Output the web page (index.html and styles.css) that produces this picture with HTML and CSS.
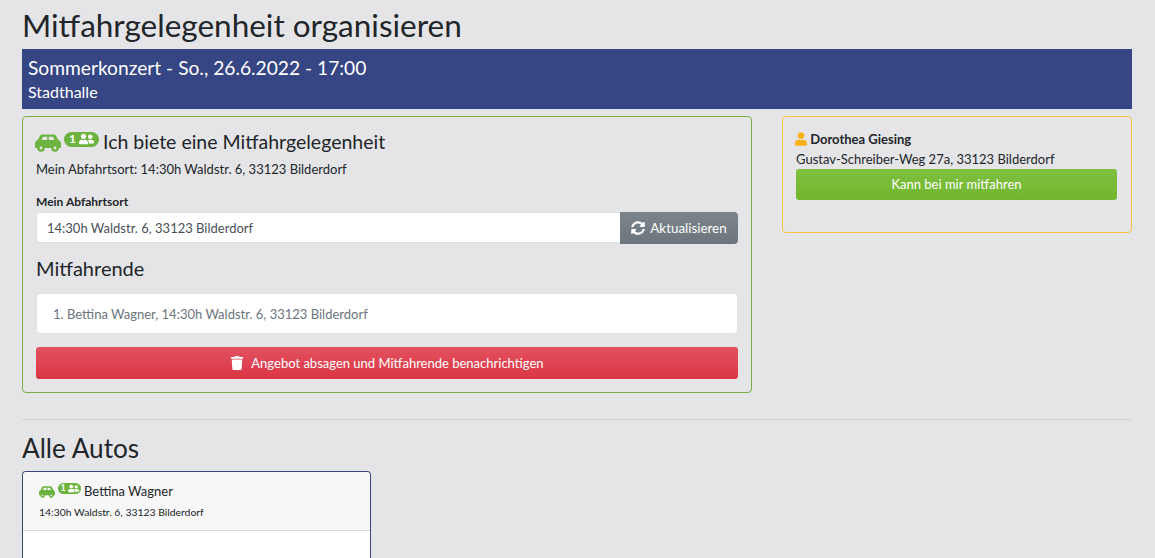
FILE: index.html
```html
<!DOCTYPE html>
<html lang="de">
<head>
  <meta charset="UTF-8" />
  <title>Mitfahrgelegenheit organisieren</title>
  <link rel="stylesheet" href="styles.css">
</head>
<body>
  <svg class="icon-defs" width="0" height="0">
    <symbol id="i-car" viewBox="0 0 26 18" preserveAspectRatio="none">
      <path fill-rule="evenodd" d="M7.500 .5h11c1.100 0 2 .5 2.600 1.400L23.300 6c1.600.6 2.700 2 2.700 3.800V13c0 .6-.4 1-1 1H1c-.6 0-1-.4-1-1V9.800C0 8 1.100 6.600 2.700 6L5 1.900C5.500 1 6.400 .5 7.500 .5zM8.200 2.800 6.500 6h5.700V2.800zm5.600 0V6h5.700l-1.700-3.200z"/>
      <circle cx="6" cy="14" r="3.800"/>
      <circle cx="20" cy="14" r="3.800"/>
      <circle class="car-hub" cx="6" cy="14" r="1.400"/>
      <circle class="car-hub" cx="20" cy="14" r="1.400"/>
    </symbol>
    <symbol id="i-users" viewBox="0 0 640 512"><path d="M192 256c61.900 0 112-50.100 112-112S253.900 32 192 32 80 82.100 80 144s50.100 112 112 112zm76.800 32h-8.300c-20.800 10-43.900 16-68.500 16s-47.600-6-68.500-16h-8.300C51.600 288 0 339.600 0 403.200V432c0 26.500 21.500 48 48 48h288c26.500 0 48-21.500 48-48v-28.800c0-63.600-51.600-115.200-115.200-115.200zM480 256c53 0 96-43 96-96s-43-96-96-96-96 43-96 96 43 96 96 96zm48 32h-3.800c-13.900 4.800-28.600 8-44.200 8s-30.300-3.200-44.200-8H432c-20.400 0-39.200 5.900-55.700 15.400 24.400 26.300 39.700 61.200 39.700 99.800v38.400c0 2.200-.5 4.300-.6 6.400H592c26.500 0 48-21.500 48-48 0-61.900-50.100-112-112-112z"/></symbol>
  </svg>

  <main class="container">
    <h1 class="page-title">Mitfahrgelegenheit organisieren</h1>

    <div class="event-banner">
      <div class="event-name">Sommerkonzert - So., 26.6.2022 - 17:00</div>
      <div class="event-place">Stadthalle</div>
    </div>

    <div class="offer-row">
      <section class="offer-card">
        <h2 class="offer-title">
          <svg class="car-icon"><use href="#i-car"/></svg>
          <span class="seat-badge">1<svg class="users-icon"><use href="#i-users"/></svg></span>
          <span>Ich biete eine Mitfahrgelegenheit</span>
        </h2>
        <p class="offer-meta">Mein Abfahrtsort: 14:30h Waldstr. 6, 33123 Bilderdorf</p>

        <label class="field-label" for="abfahrtsort">Mein Abfahrtsort</label>
        <div class="input-group">
          <input id="abfahrtsort" class="text-input" type="text" value="14:30h Waldstr. 6, 33123 Bilderdorf">
          <button class="btn btn-grey">
            <svg class="btn-icon" viewBox="0 0 512 512"><path d="M370.720 133.280C339.458 104.008 298.888 87.962 255.848 88c-77.458.068-144.328 53.178-162.791 126.850-1.344 5.363-6.122 9.150-11.651 9.150H24.103c-7.498 0-13.194-6.807-11.807-14.176C33.933 94.924 134.813 8 256 8c66.448 0 126.791 26.136 171.315 68.685L463.030 40.970C478.149 25.851 504 36.559 504 57.941V192c0 13.255-10.745 24-24 24H345.941c-21.382 0-32.090-25.851-16.971-40.971l41.750-41.749zM32 296h134.059c21.382 0 32.090 25.851 16.971 40.971l-41.750 41.750c31.262 29.273 71.835 45.319 114.876 45.280 77.418-.070 144.315-53.144 162.787-126.849 1.344-5.363 6.122-9.150 11.651-9.150h57.304c7.498 0 13.194 6.807 11.807 14.176C478.067 417.076 377.187 504 256 504c-66.448 0-126.791-26.136-171.315-68.685L48.970 471.030C33.851 486.149 8 475.441 8 454.059V320c0-13.255 10.745-24 24-24z"/></svg>
            Aktualisieren
          </button>
        </div>

        <h3 class="riders-title">Mitfahrende</h3>
        <ol class="riders-list">
          <li>Bettina Wagner, 14:30h Waldstr. 6, 33123 Bilderdorf</li>
        </ol>

        <button class="btn btn-red btn-block">
          <svg class="btn-icon trash" viewBox="0 0 448 512"><path d="M432 32H312l-9.400-18.700A24 24 0 0 0 281.100 0H166.800a23.720 23.720 0 0 0-21.400 13.300L136 32H16A16 16 0 0 0 0 48v32a16 16 0 0 0 16 16h416a16 16 0 0 0 16-16V48a16 16 0 0 0-16-16zM53.200 467a48 48 0 0 0 47.900 45h245.800a48 48 0 0 0 47.900-45L416 128H32z"/></svg>
          Angebot absagen und Mitfahrende benachrichtigen
        </button>
      </section>

      <aside class="request-card">
        <div class="request-name">
          <svg class="user-icon" viewBox="0 0 448 512"><path d="M224 256c70.700 0 128-57.300 128-128S294.700 0 224 0 96 57.300 96 128s57.300 128 128 128zm89.600 32h-16.700c-22.200 10.200-46.900 16-72.900 16s-50.600-5.800-72.900-16h-16.700C60.200 288 0 348.200 0 422.400V464c0 26.500 21.500 48 48 48h352c26.500 0 48-21.500 48-48v-41.600c0-74.200-60.200-134.400-134.400-134.400z"/></svg>
          Dorothea Giesing
        </div>
        <div class="request-address">Gustav-Schreiber-Weg 27a, 33123 Bilderdorf</div>
        <button class="btn btn-green btn-block">Kann bei mir mitfahren</button>
      </aside>
    </div>

    <hr class="divider">

    <h2 class="cars-title">Alle Autos</h2>
    <div class="car-card">
      <div class="car-card-head">
        <div class="car-driver">
          <svg class="car-icon small"><use href="#i-car"/></svg>
          <span class="seat-badge small">1<svg class="users-icon"><use href="#i-users"/></svg></span>
          <span>Bettina Wagner</span>
        </div>
        <div class="car-address">14:30h Waldstr. 6, 33123 Bilderdorf</div>
      </div>
    </div>
  </main>
</body>
</html>
```

FILE: styles.css
```css
html, body {
  height: 100%;
  overflow: hidden;
}

body {
  margin: 0;
  background: #e5e5e8;
  color: #212529;
  font-family: 'Lato', sans-serif;
  font-size: 13px;
  line-height: 1.5;
}

.icon-defs {
  position: absolute;
}

.container {
  padding: 0 23px 0 22px;
}

.page-title {
  margin: 0;
  padding-top: 5px;
  height: 49px;
  box-sizing: border-box;
  font-size: 31.5px;
  font-weight: 400;
  line-height: 40px;
}

.event-banner {
  height: 60px;
  box-sizing: border-box;
  padding: 6px 6px;
  background: #364583;
  color: #fff;
}

.event-name {
  font-size: 19.2px;
  line-height: 26px;
}

.event-place {
  font-size: 16px;
  line-height: 22px;
}

.offer-row {
  display: flex;
  justify-content: space-between;
  align-items: flex-start;
  margin-top: 7px;
}

.offer-card {
  width: 730px;
  height: 277px;
  box-sizing: border-box;
  padding: 12px 13px;
  border: 1px solid #76b043;
  border-radius: 4px;
}

.offer-title {
  display: flex;
  align-items: center;
  margin: 0;
  font-size: 19.5px;
  font-weight: 400;
  line-height: 26px;
}

.car-icon {
  flex: none;
  width: 26px;
  height: 18px;
  margin: 2px 3px 0 -1px;
  fill: #6db33f;
}

.car-hub {
  fill: #e5e5e8;
}

.seat-badge {
  display: inline-flex;
  align-items: center;
  justify-content: center;
  gap: 3px;
  width: 35px;
  height: 15px;
  margin: -6px 4px 0 0;
  border-radius: 8px;
  background: #6db33f;
  color: #fff;
  font-size: 12px;
  font-weight: 700;
}

.users-icon {
  width: 15px;
  height: 12px;
  fill: #fff;
}

.car-driver {
  display: flex;
  align-items: center;
  line-height: 20px;
}

.car-icon.small {
  width: 16px;
  height: 12px;
  margin: 2px 3px 0 0;
}

.seat-badge.small {
  gap: 2px;
  width: 23px;
  height: 11px;
  margin: -6px 3px 0 0;
  font-size: 9px;
}

.seat-badge.small .users-icon {
  width: 11px;
  height: 9px;
}

.offer-meta {
  margin: 4px 0 0;
  line-height: 20px;
}

.field-label {
  display: block;
  margin-top: 15px;
  font-size: 12px;
  font-weight: 700;
  line-height: 16px;
}

.input-group {
  display: flex;
  margin-top: 2px;
}

.text-input {
  flex: 1;
  height: 31px;
  box-sizing: border-box;
  padding: 0 10px;
  border: 1px solid #dcdfe3;
  border-right: 0;
  border-radius: 4px 0 0 4px;
  background: #fff;
  color: #495057;
  font: 13px 'Lato', sans-serif;
}

.btn {
  border: 0;
  color: #fff;
  font: 13px 'Lato', sans-serif;
  line-height: 21px;
}

.btn-block {
  display: block;
  width: 100%;
}

.btn-icon {
  width: 14px;
  height: 14px;
  fill: #fff;
  vertical-align: -2px;
  margin-right: 2px;
}

.btn-grey {
  width: 118px;
  height: 32px;
  padding: 0;
  border-radius: 0 4px 4px 0;
  background: linear-gradient(#7d858c, #6c757d);
  font-size: 13.4px;
}

.riders-title {
  margin: 12px 0 0;
  font-size: 20px;
  font-weight: 400;
  line-height: 24px;
}

.riders-list {
  margin: 13px 0 0;
  padding: 11px 16px 9px;
  border: 1px solid #dfe1e5;
  border-radius: 4px;
  background: #fff;
  color: #6c757d;
  list-style-position: inside;
  line-height: 19px;
}

.btn-red {
  height: 32px;
  margin-top: 13px;
  border-radius: 3px;
  background: linear-gradient(#e2525f, #dc3545);
}

.btn-icon.trash {
  margin-right: 4px;
}

.request-card {
  width: 350px;
  height: 117px;
  box-sizing: border-box;
  padding: 12px 14px 12px 13px;
  border: 1px solid #f6c343;
  border-radius: 4px;
}

.request-name {
  font-weight: 700;
  line-height: 20px;
}

.user-icon {
  width: 12px;
  height: 14px;
  margin-left: -1px;
  fill: #f9b116;
  vertical-align: -2px;
}

.request-address {
  line-height: 20px;
}

.btn-green {
  height: 31px;
  border-radius: 3px;
  background: linear-gradient(#7fc03f, #71b62f);
}

.divider {
  margin: 26px 0 0;
  border: 0;
  border-top: 1px solid #d3d3d6;
}

.cars-title {
  margin: 10px 0 0;
  font-size: 26.2px;
  font-weight: 400;
  line-height: 36px;
}

.car-card {
  width: 349px;
  height: 87px;
  box-sizing: border-box;
  margin-top: 5px;
  border: 1px solid #3a4570;
  border-bottom: 0;
  border-radius: 4px 4px 0 0;
  background: #fff;
}

.car-card-head {
  height: 59px;
  box-sizing: border-box;
  padding: 9px 16px;
  border-bottom: 1px solid #d9d9db;
  border-radius: 4px 4px 0 0;
  background: #f7f7f8;
}

.car-address {
  margin-top: 3px;
  font-size: 10.4px;
  line-height: 16px;
}
```
